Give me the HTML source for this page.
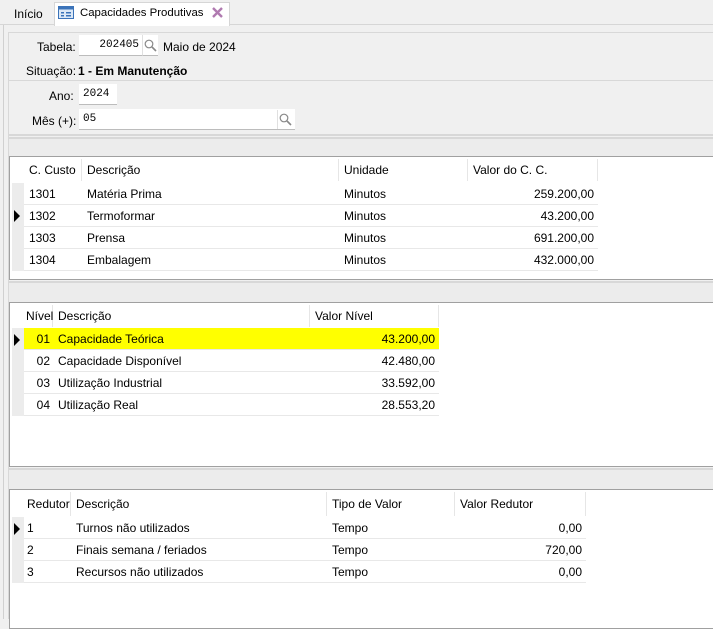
<!DOCTYPE html>
<html><head><meta charset="utf-8"><style>
*{box-sizing:border-box;margin:0;padding:0}
body{width:713px;height:619px;overflow:hidden;background:#f0f0f0;font-family:"Liberation Sans",sans-serif;font-size:12px;color:#000;position:relative}
.a{position:absolute}
.inp{position:absolute;background:#fff;border-bottom:1px solid #bcbcbc;font-family:"Liberation Mono",monospace;font-size:11px;line-height:20px;padding-left:4px}
.grid{position:absolute;left:9px;right:0;background:#fff;border:1px solid #a0a0a0;border-right:none}
.ind{position:absolute;left:2px;width:12px;background:#ececec}
.hd{position:absolute;top:2px;height:22px;line-height:22px;padding-left:5px;border-right:1px solid #e6e6e6;white-space:nowrap;overflow:hidden}
.row{position:absolute;left:14px;height:22px;border-bottom:1px solid #e8e8e8}
.c{position:absolute;top:0;height:21px;line-height:22px;padding-left:5px;white-space:nowrap}
.r{text-align:right;padding-right:4px;padding-left:0}
.tri{position:absolute;left:4px;width:0;height:0;border-left:6px solid #000;border-top:6px solid transparent;border-bottom:6px solid transparent}
.strip{position:absolute;left:9px;right:0;background:#ececec;border-top:2px solid #d8d8d8}
</style></head><body>
<div class="a" style="left:0;top:0;width:713px;height:25px;background:#f0f0f0;border-bottom:1px solid #d6d6d6"></div>
<div class="a" style="left:14px;top:7px">Início</div>
<div class="a" style="left:54px;top:2px;width:176px;height:24px;background:#fff;border:1px solid #d6d6d6;border-bottom:none"></div>
<svg class="a" style="left:58px;top:6px" width="16" height="13"><rect x="0.5" y="0.5" width="15" height="12" fill="#dbe8f6" stroke="#3b73b9"/><rect x="0.5" y="0.5" width="15" height="3" fill="#3b73b9"/><rect x="3" y="6" width="3" height="1.5" fill="#3b73b9"/><rect x="8" y="6" width="5" height="1.5" fill="#3b73b9"/><rect x="3" y="9" width="3" height="1.5" fill="#3b73b9"/><rect x="8" y="9" width="5" height="1.5" fill="#3b73b9"/></svg>
<div class="a" style="left:80px;top:7px;font-size:11.4px">Capacidades Produtivas</div>
<svg class="a" style="left:212px;top:7px" width="11" height="11"><path d="M1 1L10 10M10 1L1 10" stroke="#b07ab0" stroke-width="2.4"/></svg>
<div class="a" style="left:3px;top:25px;width:1px;height:594px;background:#d0d0d0"></div>
<div class="a" style="left:8px;top:32px;width:1px;height:587px;background:#d8d8d8"></div>
<div class="a" style="left:8px;top:32px;width:705px;height:1px;background:#d8d8d8"></div>
<div class="a" style="left:37px;top:40px">Tabela:</div>
<div class="inp" style="left:79px;top:35px;width:63px;text-align:right;padding-right:3px">202405</div>
<div class="a" style="left:142px;top:35px;width:16px;height:21px;background:#fff;border-left:1px solid #e0e0e0;border-bottom:1px solid #bcbcbc"></div>
<svg class="a" style="left:144px;top:39px" width="13" height="13"><circle cx="5" cy="5" r="3.8" fill="none" stroke="#888" stroke-width="1.2"/><path d="M8 8L12 12" stroke="#888" stroke-width="1.6"/></svg>
<div class="a" style="left:163px;top:40px">Maio de 2024</div>
<div class="a" style="left:26px;top:64px">Situação:</div>
<div class="a" style="left:78px;top:64px;font-weight:bold">1 - Em Manutenção</div>
<div class="a" style="left:9px;top:80px;width:704px;height:1px;background:#d8d8d8"></div>
<div class="a" style="left:49px;top:89px">Ano:</div>
<div class="inp" style="left:79px;top:84px;width:38px">2024</div>
<div class="a" style="left:32px;top:114px">Mês (+):</div>
<div class="inp" style="left:79px;top:109px;width:216px">05</div>
<div class="a" style="left:277px;top:110px;width:1px;height:19px;background:#e0e0e0"></div>
<svg class="a" style="left:279px;top:113px" width="13" height="13"><circle cx="5" cy="5" r="3.8" fill="none" stroke="#888" stroke-width="1.2"/><path d="M8 8L12 12" stroke="#888" stroke-width="1.6"/></svg>
<div class="a" style="left:9px;top:134px;width:704px;height:2px;background:#d8d8d8"></div>
<div class="strip" style="top:137px;height:20px"></div>
<div class="grid" style="top:156px;height:124px">
 <div class="ind" style="top:26px;height:88px"></div>
 <div class="hd" style="left:14px;width:58px">C. Custo</div>
 <div class="hd" style="left:72px;width:257px">Descrição</div>
 <div class="hd" style="left:329px;width:129px">Unidade</div>
 <div class="hd" style="left:458px;width:130px">Valor do C. C.</div>
 <div class="row" style="top:26px;width:574px"><div class="c" style="left:0">1301</div><div class="c" style="left:58px">Matéria Prima</div><div class="c" style="left:315px">Minutos</div><div class="c r" style="left:444px;width:130px">259.200,00</div></div>
 <div class="row" style="top:48px;width:574px"><div class="c" style="left:0">1302</div><div class="c" style="left:58px">Termoformar</div><div class="c" style="left:315px">Minutos</div><div class="c r" style="left:444px;width:130px">43.200,00</div></div>
 <div class="tri" style="top:53px"></div>
 <div class="row" style="top:70px;width:574px"><div class="c" style="left:0">1303</div><div class="c" style="left:58px">Prensa</div><div class="c" style="left:315px">Minutos</div><div class="c r" style="left:444px;width:130px">691.200,00</div></div>
 <div class="row" style="top:92px;width:574px"><div class="c" style="left:0">1304</div><div class="c" style="left:58px">Embalagem</div><div class="c" style="left:315px">Minutos</div><div class="c r" style="left:444px;width:130px">432.000,00</div></div>
</div>
<div class="strip" style="top:281px;height:22px"></div>
<div class="grid" style="top:302px;height:165px">
 <div class="ind" style="top:25px;height:88px"></div>
 <div class="hd" style="left:14px;width:29px;padding-left:2px;overflow:visible">Nível</div>
 <div class="hd" style="left:43px;width:257px">Descrição</div>
 <div class="hd" style="left:300px;width:129px">Valor Nível</div>
 <div class="row" style="top:25px;width:415px;background:#ffff00"><div class="c r" style="left:0;width:29px;padding-right:3px">01</div><div class="c" style="left:29px">Capacidade Teórica</div><div class="c r" style="left:286px;width:129px">43.200,00</div></div>
 <div class="tri" style="top:31px"></div>
 <div class="row" style="top:47px;width:415px"><div class="c r" style="left:0;width:29px;padding-right:3px">02</div><div class="c" style="left:29px">Capacidade Disponível</div><div class="c r" style="left:286px;width:129px">42.480,00</div></div>
 <div class="row" style="top:69px;width:415px"><div class="c r" style="left:0;width:29px;padding-right:3px">03</div><div class="c" style="left:29px">Utilização Industrial</div><div class="c r" style="left:286px;width:129px">33.592,00</div></div>
 <div class="row" style="top:91px;width:415px"><div class="c r" style="left:0;width:29px;padding-right:3px">04</div><div class="c" style="left:29px">Utilização Real</div><div class="c r" style="left:286px;width:129px">28.553,20</div></div>
</div>
<div class="strip" style="top:468px;height:22px"></div>
<div class="grid" style="top:489px;height:140px">
 <div class="ind" style="top:27px;height:66px"></div>
 <div class="hd" style="left:14px;width:47px;height:24px;line-height:24px;padding-left:3px">Redutor</div>
 <div class="hd" style="left:61px;width:256px;height:24px;line-height:24px">Descrição</div>
 <div class="hd" style="left:317px;width:128px;height:24px;line-height:24px">Tipo de Valor</div>
 <div class="hd" style="left:445px;width:131px;height:24px;line-height:24px">Valor Redutor</div>
 <div class="row" style="top:27px;width:562px"><div class="c" style="left:0;padding-left:3px">1</div><div class="c" style="left:47px">Turnos não utilizados</div><div class="c" style="left:303px">Tempo</div><div class="c r" style="left:431px;width:131px">0,00</div></div>
 <div class="tri" style="top:33px"></div>
 <div class="row" style="top:49px;width:562px"><div class="c" style="left:0;padding-left:3px">2</div><div class="c" style="left:47px">Finais semana / feriados</div><div class="c" style="left:303px">Tempo</div><div class="c r" style="left:431px;width:131px">720,00</div></div>
 <div class="row" style="top:71px;width:562px"><div class="c" style="left:0;padding-left:3px">3</div><div class="c" style="left:47px">Recursos não utilizados</div><div class="c" style="left:303px">Tempo</div><div class="c r" style="left:431px;width:131px">0,00</div></div>
</div>
</body></html>
